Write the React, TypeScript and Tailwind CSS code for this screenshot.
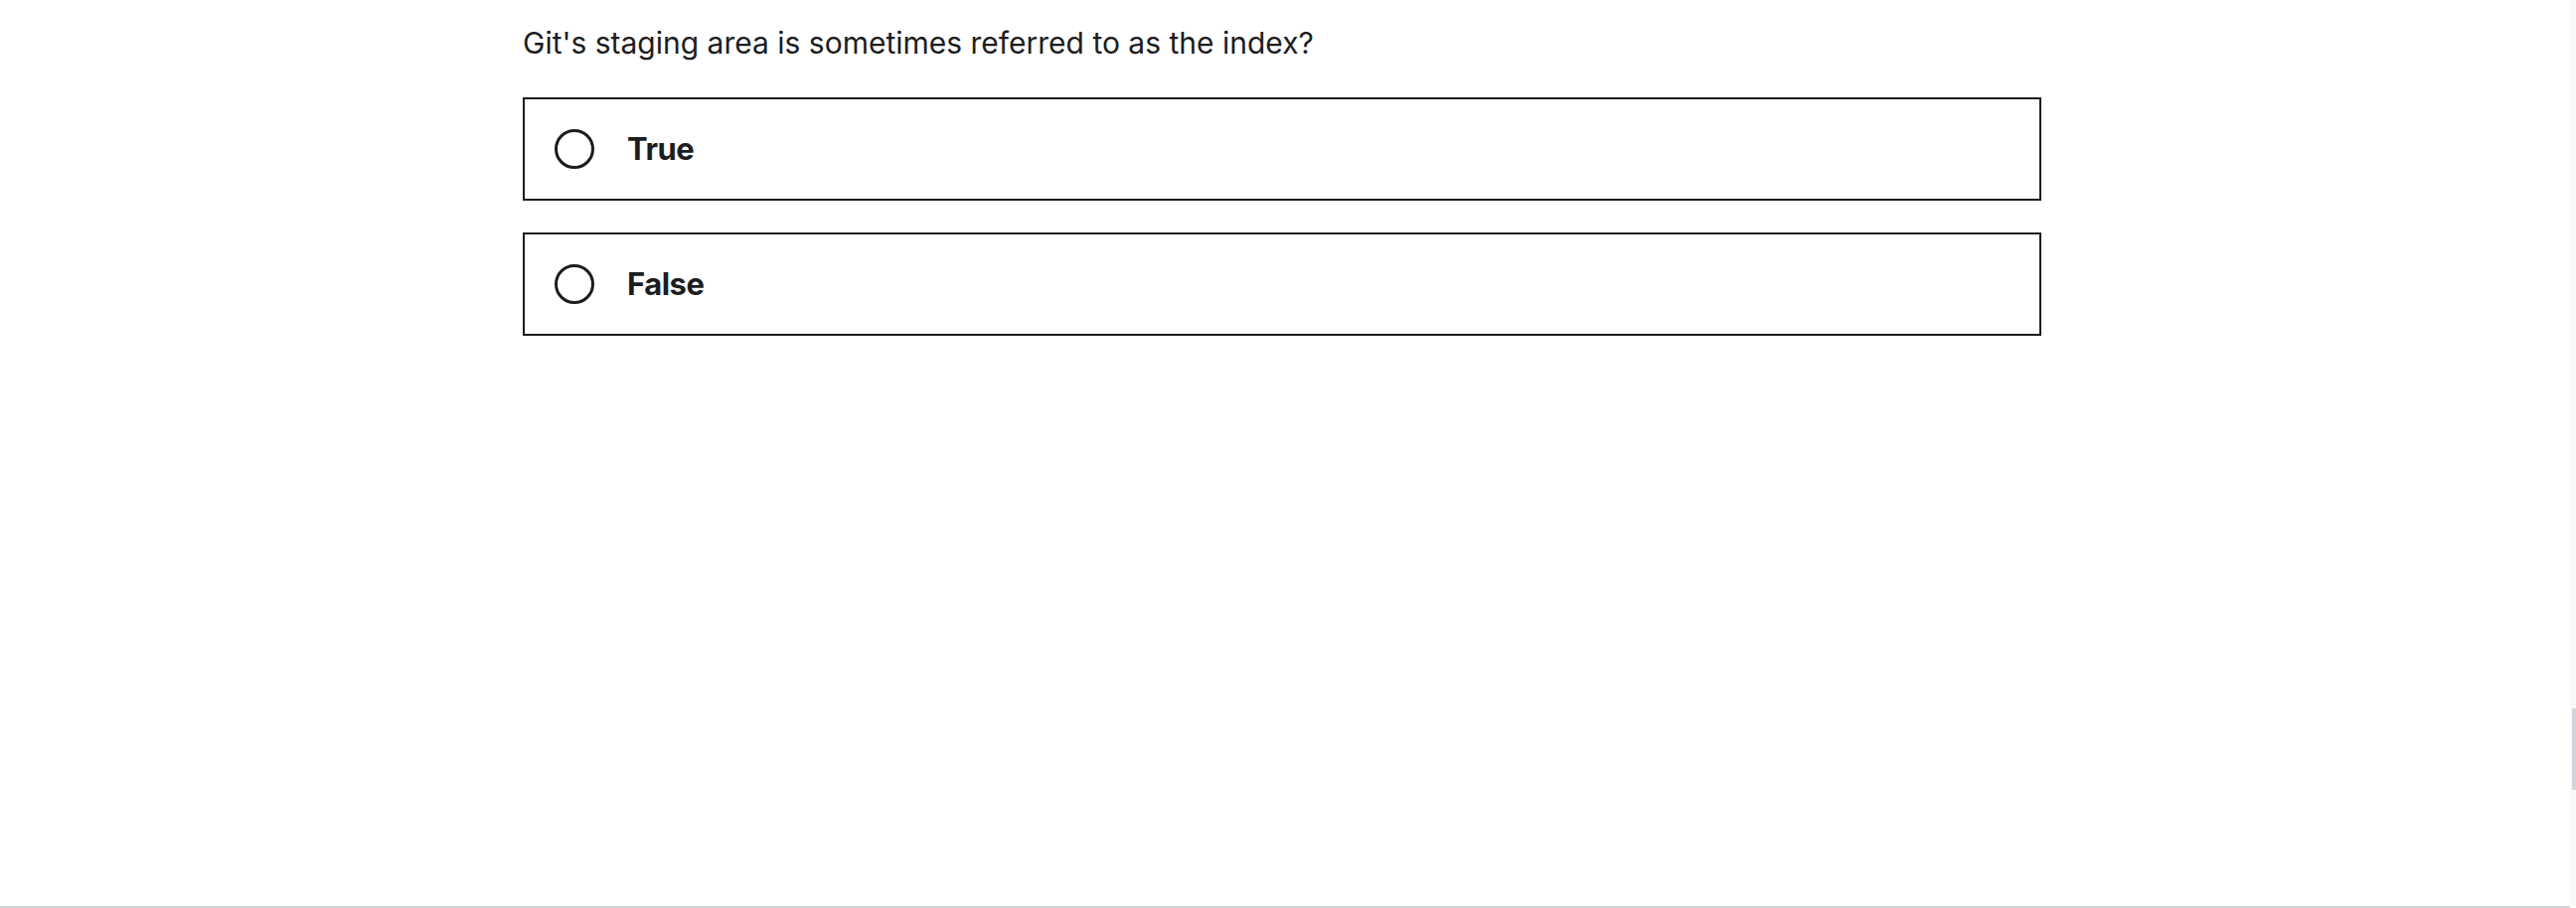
import React from "react";

const options = ["True", "False"];

export default function App() {
  return (
    <div
      className="flex h-[914px] w-full flex-col bg-white text-[#1c1d1f]"
      style={{ fontFamily: "Inter, 'Liberation Sans', sans-serif" }}
    >
      <div className="flex min-h-0 flex-1">
        <main className="flex-1 pl-[526px] pt-[22px]">
          <div className="w-[1528px]">
            <p className="text-[30px] leading-[42px]">
              Git's staging area is sometimes referred to as the index?
            </p>
            <div className="mt-[34px] flex flex-col gap-[32px]">
              {options.map((o) => (
                <label
                  key={o}
                  className="flex h-[104px] items-center border-2 border-[#1c1d1f] pl-[30px]"
                >
                  <span className="h-[40px] w-[40px] shrink-0 rounded-full border-[3px] border-[#1c1d1f]" />
                  <span className="ml-[33px] text-[31px] font-bold tracking-[-0.5px]">{o}</span>
                </label>
              ))}
            </div>
          </div>
        </main>
        <div className="flex w-[6px] flex-col bg-[#f8f9fa] pl-[2px] pt-[713px]">
          <div className="h-[82px] w-[4px] bg-[#d1d5db]" />
        </div>
      </div>
      <div className="h-[2px] w-[2586px] bg-[#d1d5db]" />
    </div>
  );
}
